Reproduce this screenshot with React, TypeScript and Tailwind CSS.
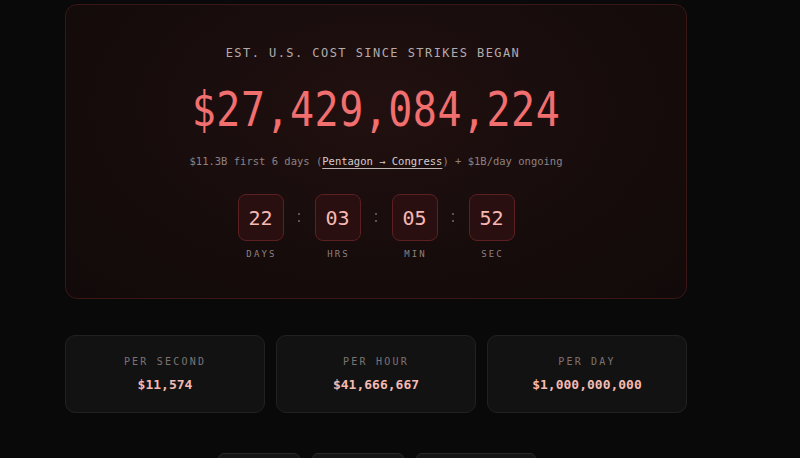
import React from 'react';

const mono = { fontFamily: '"DejaVu Sans Mono", "Liberation Mono", monospace' };

const countdown = [
  { value: '22', label: 'DAYS' },
  { value: '03', label: 'HRS' },
  { value: '05', label: 'MIN' },
  { value: '52', label: 'SEC' },
];

const rates = [
  { label: 'PER SECOND', value: '$11,574' },
  { label: 'PER HOUR', value: '$41,666,667' },
  { label: 'PER DAY', value: '$1,000,000,000' },
];

const TimeBox = ({ value, label }: { value: string; label: string }) => (
  <div className="flex flex-col items-center gap-[7px]">
    <div className="w-[46px] h-[47px] flex items-center justify-center rounded-lg border border-[#5c2022] bg-[#2a0f10] text-[20px] leading-none font-medium text-[#f5b8b2]">
      {value}
    </div>
    <span className="text-[9px] tracking-[0.24em] text-[#8a8181] pl-[2px]">{label}</span>
  </div>
);

const Colon = () => (
  <div className="flex flex-col gap-[5px] h-[47px] justify-center px-[14.5px]">
    <span className="block w-[2px] h-[2px] rounded-full bg-[#766b6b]" />
    <span className="block w-[2px] h-[2px] rounded-full bg-[#766b6b]" />
  </div>
);

export default function App() {
  return (
    <div className="min-h-[458px] h-[458px] overflow-hidden bg-[#0a0909] pl-[65px] pt-1" style={mono}>
      <div className="w-[622px]">
        {/* main counter */}
        <section className="h-[295px] rounded-xl border border-[#3a1617] bg-[radial-gradient(ellipse_at_50%_35%,#221010_0%,#170c0c_55%,#120a0a_100%)] flex flex-col items-center pt-[40px]">
          <h2 className="text-[12px] leading-4 tracking-[0.12em] text-[#b3abab] pr-[6px]">
            EST. U.S. COST SINCE STRIKES BEGAN
          </h2>
          <div className="mt-[26px] text-[40px] leading-[44px] tracking-[0.012em] text-[#f26f6f] font-medium scale-y-[1.2]">
            $27,429,084,224
          </div>
          <p className="mt-[22px] text-[10.5px] leading-4 text-[#8c8282]">
            $11.3B first 6 days (
            <span className="text-[#d6cdcd] underline underline-offset-[3px] decoration-[#bfb5b5]">Pentagon → Congress</span>
            ) + $1B/day ongoing
          </p>
          <div className="mt-[25px] flex items-start">
            {countdown.map((c, i) => (
              <React.Fragment key={c.label}>
                {i > 0 && <Colon />}
                <TimeBox value={c.value} label={c.label} />
              </React.Fragment>
            ))}
          </div>
        </section>

        {/* rate cards */}
        <div className="mt-[36px] grid grid-cols-3 gap-[11px]">
          {rates.map((r) => (
            <div
              key={r.label}
              className="h-[78px] rounded-[10px] border border-[#232020] bg-[#131212] flex flex-col items-center justify-center gap-[9px]"
            >
              <span className="text-[10px] leading-3 tracking-[0.22em] text-[#7b7474]">{r.label}</span>
              <span className="text-[13px] leading-4 font-bold text-[#f3bab2]">{r.value}</span>
            </div>
          ))}
        </div>

        {/* bottom buttons */}
        <div className="mt-[40px] flex gap-[12px] pl-[153px]">
          <button className="w-[82px] h-8 rounded-md border border-[#2a2828] bg-[#161515]" />
          <button className="w-[92px] h-8 rounded-md border border-[#2a2828] bg-[#161515]" />
          <button className="w-[120px] h-8 rounded-md border border-[#2a2828] bg-[#161515]" />
        </div>
      </div>
    </div>
  );
}
